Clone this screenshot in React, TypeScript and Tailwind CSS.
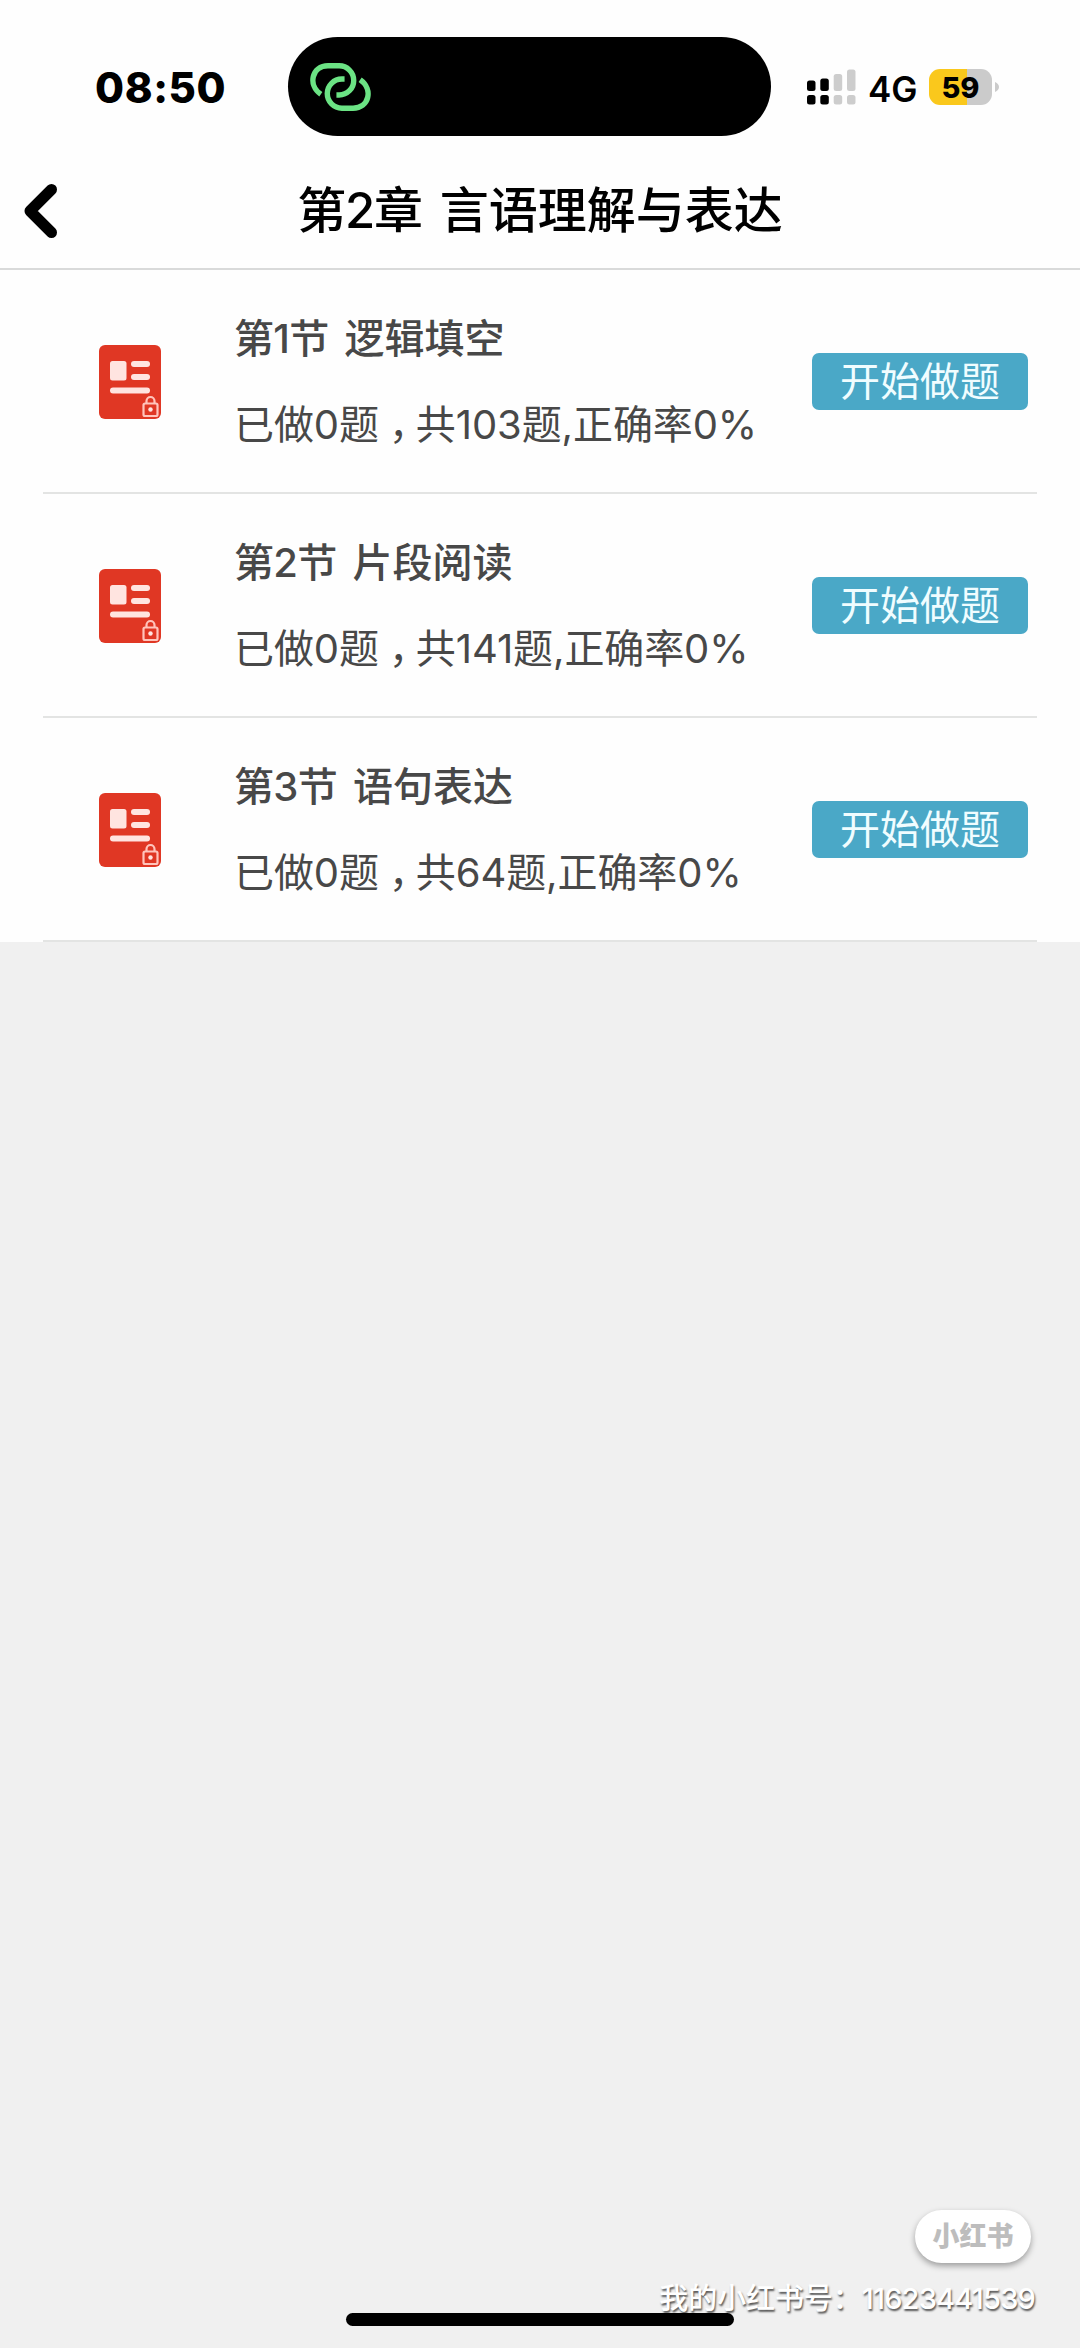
interface Section {
  id: number
  title: string
  name: string
  done: number
  total: number
  rate: number
}

const sections: Section[] = [
  { id: 1, title: '第1节', name: '逻辑填空', done: 0, total: 103, rate: 0 },
  { id: 2, title: '第2节', name: '片段阅读', done: 0, total: 141, rate: 0 },
  { id: 3, title: '第3节', name: '语句表达', done: 0, total: 64, rate: 0 },
]

function LinkIcon() {
  return (
    <svg className="w-[61px] h-[48px]" viewBox="0 0 180 141" fill="none" stroke="#6be384" strokeWidth="16">
      <path d="M32 92C-8 64 6 8 53 8H86A43 43 0 0 1 86 94H78" />
      <path d="M148 49C188 77 174 133 127 133H94A43 43 0 0 1 94 47H102" />
    </svg>
  )
}

function SignalIcon() {
  return (
    <svg className="w-[50px] h-[36px]" viewBox="0 0 50 36">
      <g fill="#000">
        <rect x="0" y="11.5" width="8.5" height="10.5" rx="2.5" />
        <rect x="13.3" y="9.5" width="8.5" height="12.5" rx="2.5" />
        <rect x="0" y="26" width="8.5" height="9.5" rx="2.5" />
        <rect x="13.3" y="26" width="8.5" height="9.5" rx="2.5" />
      </g>
      <g fill="#cdcdcd">
        <rect x="26.7" y="5" width="8.5" height="17" rx="2.5" />
        <rect x="40" y="0.5" width="8.5" height="21.5" rx="2.5" />
        <rect x="26.7" y="26" width="8.5" height="9.5" rx="2.5" />
        <rect x="40" y="26" width="8.5" height="9.5" rx="2.5" />
      </g>
    </svg>
  )
}

function PaperIcon() {
  return (
    <svg className="mt-[2px] w-[62px] h-[74px] shrink-0" viewBox="0 0 62 74">
      <rect width="62" height="74" rx="6" fill="#e03724" />
      <g fill="#ffe4e0">
        <rect x="11" y="16" width="16.5" height="19.5" rx="2.5" />
        <rect x="32" y="16" width="19" height="6" rx="3" />
        <rect x="32" y="29" width="19" height="6" rx="3" />
        <rect x="11" y="42.5" width="40" height="6" rx="3" />
        <circle cx="51.5" cy="64.5" r="2.2" />
      </g>
      <g fill="none" stroke="#ffc4bb" strokeWidth="2.2">
        <rect x="44.5" y="58.5" width="14" height="12.5" rx="1.5" />
        <path d="M47.5 58.5V56a4 4 0 0 1 8 0v2.5" />
      </g>
    </svg>
  )
}

function StatusBar() {
  return (
    <div className="flex h-[140px] pt-[37px]">
      <div className="w-[288px] pl-[95px] pt-[26px] text-[42px] leading-[50px] font-extrabold tracking-[0.6px] text-black">
        08:50
      </div>
      <div className="w-[483px] h-[99px] rounded-full bg-black pl-[22px] pt-[26px]">
        <LinkIcon />
      </div>
      <div className="flex h-[36px] mt-[32px] ml-[36px] items-center text-black">
        <SignalIcon />
        <span className="ml-[11px] w-[50px] mt-[3px] text-[35px] leading-[36px] font-semibold">4G</span>
        <span className="ml-[11px] w-[63px] h-[36px] rounded-[11px] bg-[linear-gradient(90deg,#fac81c_60%,#cbcbcb_60%)] text-center text-[29px] leading-[37px] font-extrabold">
          59
        </span>
        <svg className="ml-[3px] w-[4px] h-[10px]" viewBox="0 0 4 10">
          <path d="M0 0Q4 2 4 5T0 10Z" fill="#cbcbcb" />
        </svg>
      </div>
    </div>
  )
}

function SectionRow({ section }: { section: Section }) {
  return (
    <div className="mx-[43px] h-[224px] border-b-2 border-[#e3e4e3] flex items-center pl-[56px] pr-[9px]">
      <PaperIcon />
      <div className="mt-[2px] ml-[73px] flex-1 whitespace-nowrap text-[#484848]">
        <div className="text-[40px] leading-[60px] font-medium">
          <span className="tracking-[-0.7px] mr-[16px]">{section.title}</span>
          <span>{section.name}</span>
        </div>
        <div className="mt-[26px] text-[40px] leading-[60px] tracking-[-0.1px]">
          已做{section.done}题
          <span className="inline-block w-[37px] pl-[10px] [font-feature-settings:'halt']">，</span>
          共{section.total}题,正确率{section.rate}%
        </div>
      </div>
      <button className="w-[216px] h-[57px] rounded-[7px] bg-[#4aa8c7] text-[40px] leading-[57px] text-[#f0fdff]">
        开始做题
      </button>
    </div>
  )
}

export default function App() {
  return (
    <div className="w-[1080px] h-[2348px] bg-[#f0f0f0] flex flex-col overflow-hidden font-[Inter,'Noto_Sans_CJK_SC',sans-serif]">
      <header className="bg-[#fefefe] h-[270px] border-b-2 border-[#d9dada]">
        <StatusBar />
        <div className="flex items-center h-[141px]">
          <svg className="ml-[24px] w-[33px] h-[54px]" viewBox="0 0 33 54">
            <path d="M27.5 5.5L6 27L27.5 48.5" fill="none" stroke="#000" strokeWidth="11" strokeLinecap="round" strokeLinejoin="round" />
          </svg>
          <h1 className="w-[966px] text-center text-[49px] leading-[70px] font-medium text-black whitespace-nowrap">
            <span className="tracking-[-1.2px] mr-[18px]">第2章</span>
            <span>言语理解与表达</span>
          </h1>
        </div>
      </header>

      <main className="bg-[#fefefe]">
        {sections.map(s => (
          <SectionRow key={s.id} section={s} />
        ))}
      </main>

      {/* Watermark and home indicator */}
      <footer className="relative mt-auto h-[139px] flex flex-col items-end">
        <div className="mr-[49px] mt-px w-[116px] h-[53px] rounded-full bg-white shadow-[0_3px_6px_rgba(0,0,0,0.35)] text-center text-[27px] leading-[53px] font-black text-[#bdbdbd]">
          小红书
        </div>
        <div className="mr-[45px] mt-[16px] flex text-[29px] leading-[40px] font-medium text-white whitespace-nowrap [text-shadow:1px_2px_2px_rgba(0,0,0,0.65)]">
          <span className="tracking-[-0.1px]">我的小红书号：</span>
          <span className="tracking-[-0.8px]">11623441539</span>
        </div>
        <div className="absolute left-[346px] bottom-[22px] w-[388px] h-[13px] rounded-full bg-black" />
      </footer>
    </div>
  )
}
